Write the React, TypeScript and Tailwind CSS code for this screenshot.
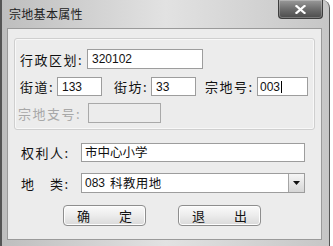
import React from 'react';

const cjk = '"Noto Sans CJK SC", "Noto Sans", sans-serif';
const num = '"Liberation Sans", "Noto Sans CJK SC", sans-serif';

function Field({ value, className = '', caret = false }: { value: string; className?: string; caret?: boolean }) {
  return (
    <div
      className={`flex items-center bg-white border border-[#9d9d9d] pl-[4px] text-[12px] text-[#111] leading-none ${className}`}
      style={{ fontFamily: num }}
    >
      {value}
      {caret && <span className="w-px h-[12px] bg-black ml-[1px]" />}
    </div>
  );
}

function Label({ text, className = '' }: { text: string; className?: string }) {
  return (
    <span className={`text-[13px] tracking-[1.5px] leading-none whitespace-nowrap ${className}`} style={{ fontFamily: cjk }}>
      {text}
    </span>
  );
}

function Btn({ a, b }: { a: string; b: string }) {
  return (
    <button
      className="w-[83px] h-[21px] rounded-[4px] border border-[#8e8e8e] bg-gradient-to-b from-[#fafafa] via-[#ececec] to-[#d9d9d9] flex items-center justify-center gap-[29px] text-[13px] text-[#111] leading-none shadow-[inset_0_0_0_1px_#fdfdfd]"
      style={{ fontFamily: cjk }}
    >
      <span>{a}</span>
      <span>{b}</span>
    </button>
  );
}

export default function App() {
  return (
    <div className="w-[333px] h-[246px] bg-white overflow-hidden">
      <div className="w-[330px] h-[246px] flex flex-col rounded-tr-[8px] border-l-2 border-r border-[#555] bg-gradient-to-r from-[#bebebe] via-[#e2e2e2] to-[#c6c6c6]">
        {/* Title bar */}
        <div className="h-[28px] flex items-start shrink-0">
          <span className="mt-[8px] ml-[7px] text-[12px] tracking-[0.3px] leading-none text-[#222]" style={{ fontFamily: cjk }}>
            宗地基本属性
          </span>
          <div className="ml-auto mr-[6px] w-[45px] h-[19px] rounded-b-[4px] border border-t-0 border-[#3d3d3d] bg-gradient-to-b from-[#9a9a9a] via-[#6e6e6e] to-[#4c4c4c] flex items-center justify-center shadow-[inset_0_0_0_1px_rgba(255,255,255,0.25)]">
            <svg width="11" height="9" viewBox="0 0 11 9">
              <path d="M1.5 1 L9.5 8 M9.5 1 L1.5 8" stroke="#fff" strokeWidth="2.2" strokeLinecap="square" />
            </svg>
          </div>
        </div>

        {/* Client area */}
        <div className="ml-[5px] mr-[7px] mb-[6px] flex-1 border border-[#9a9a9a] bg-[#ececec] pt-[9px] px-[6px] text-[#111]">
          {/* Group box */}
          <div className="h-[92px] rounded-[3px] border border-[#cfcfcf] shadow-[inset_0_0_0_1px_#f8f8f8] pl-[5px] pt-[10px]">
            <div className="flex items-center h-[20px]">
              <Label text="行政区划:" className="w-[67px]" />
              <Field value="320102" className="w-[116px] h-[20px]" />
            </div>
            <div className="flex items-center h-[19px] mt-[8px]">
              <Label text="街道:" className="w-[37px]" />
              <Field value="133" className="w-[45px] h-[19px]" />
              <Label text="街坊:" className="w-[37px] ml-[12px]" />
              <Field value="33" className="w-[45px] h-[19px]" />
              <Label text="宗地号:" className="w-[52px] ml-[9px]" />
              <Field value="003" caret className="w-[51px] h-[19px] !pl-[2px]" />
            </div>
            <div className="flex items-center h-[20px] mt-[7px]">
              <Label text="宗地支号:" className="w-[70px] -ml-[2px] text-[#a8a8a8]" />
              <div className="w-[73px] h-[20px] border border-[#a9a9a9] bg-[#ececec]" />
            </div>
          </div>

          {/* Owner */}
          <div className="flex items-center h-[19px] mt-[13px] pl-[7px]">
            <Label text="权利人:" className="w-[60px]" />
            <div
              className="w-[224px] h-[19px] flex items-center bg-white border border-[#9d9d9d] pl-[3px] text-[12.5px] leading-none"
              style={{ fontFamily: cjk }}
            >
              市中心小学
            </div>
          </div>

          {/* Land type */}
          <div className="flex items-center h-[20px] mt-[11px] pl-[7px]">
            <Label text="地　类:" className="w-[60px] tracking-[0px]" />
            <div className="w-[224px] h-[20px] flex items-center bg-white border border-[#9d9d9d]">
              <span className="flex-1 flex items-center gap-[5px] pl-[3px] text-[12.5px] leading-none whitespace-nowrap" style={{ fontFamily: cjk }}>
                <span style={{ fontFamily: num }} className="text-[12px]">083</span>
                <span className="tracking-[0.4px]">科教用地</span>
              </span>
              <div className="w-[16px] h-[18px] border-l border-[#a5a5a5] bg-gradient-to-b from-[#f6f6f6] to-[#d6d6d6] flex items-center justify-center">
                <svg width="7" height="4" viewBox="0 0 7 4">
                  <path d="M0 0 H7 L3.5 4 Z" fill="#111" />
                </svg>
              </div>
            </div>
          </div>

          {/* Buttons */}
          <div className="flex h-[21px] mt-[12px] pl-[49px] gap-[32px]">
            <Btn a="确" b="定" />
            <Btn a="退" b="出" />
          </div>
        </div>
      </div>
    </div>
  );
}
